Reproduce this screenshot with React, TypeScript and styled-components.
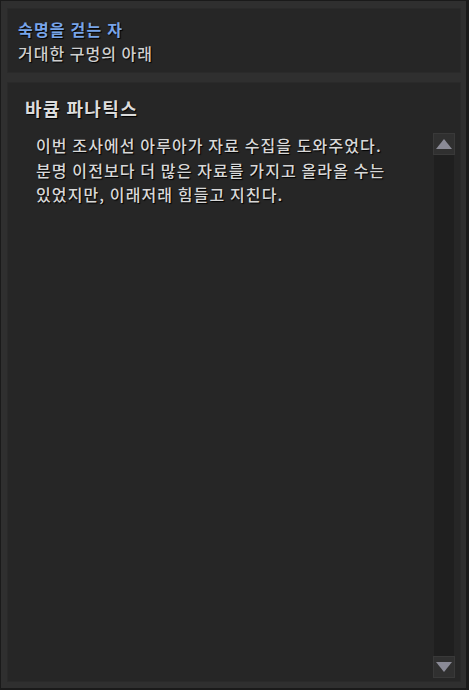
import styled, { createGlobalStyle } from 'styled-components';

const GlobalStyle = createGlobalStyle`
  html, body {
    margin: 0;
    padding: 0;
    background: #1a1a1a;
  }
  * {
    box-sizing: border-box;
  }
`;

const Window = styled.div`
  width: 469px;
  height: 690px;
  display: flex;
  flex-direction: column;
  gap: 9px;
  padding: 7px 5px 6px 6px;
  background: #2f2f2f;
  border-style: solid;
  border-color: #1a1a1a;
  border-width: 1px 3px 2px 1px;
  font-family: 'Noto Sans CJK KR', 'Noto Sans', sans-serif;
`;

const Panel = styled.section`
  background: #262626;
  box-shadow: inset 0 0 0 1px #2a2a2a;
`;

const HeaderPanel = styled(Panel)`
  height: 65px;
  padding: 9px 11px 0;
  display: flex;
  flex-direction: column;
`;

const HeaderLine = styled.div<{ $accent?: boolean }>`
  font-size: 16px;
  line-height: 24px;
  font-weight: ${(p) => (p.$accent ? 700 : 500)};
  color: ${(p) => (p.$accent ? '#78a4e8' : '#cfcfcf')};
  letter-spacing: ${(p) => (p.$accent ? '1.2px' : '1px')};
  text-shadow: 1px 1px 1px #000;
`;

const ContentPanel = styled(Panel)`
  flex: 1;
  display: flex;
  flex-direction: column;
  padding: 14px 6px 4px 18px;
  min-height: 0;
`;

const Title = styled.h2`
  margin: 0 0 13px;
  font-size: 18px;
  line-height: 24px;
  font-weight: 700;
  color: #dcdcdc;
  letter-spacing: 1.4px;
  text-shadow: 1px 1px 1px #000;
`;

const Body = styled.div`
  flex: 1;
  display: flex;
  gap: 12px;
  min-height: 0;
`;

const Text = styled.p`
  flex: 1;
  margin: 0;
  padding: 0 0 0 11px;
  font-size: 16px;
  line-height: 24.5px;
  font-weight: 500;
  color: #d8d8d8;
  letter-spacing: 1.1px;
  text-shadow: 1px 1px 1px #000;
  word-break: keep-all;
  white-space: nowrap;
`;

const Scrollbar = styled.div`
  width: 22px;
  display: flex;
  flex-direction: column;
`;

const Track = styled.div`
  flex: 1;
  margin: 0 1px;
  background: #1f1f1f;
`;

const ArrowButton = styled.div`
  height: 22px;
  display: flex;
  align-items: center;
  justify-content: center;
  background: #303030;
  border: 1px solid #393939;
`;

const Arrow = ({ down }: { down?: boolean }) => (
  <svg width="16" height="10" viewBox="0 0 16 10">
    <polygon
      points={down ? '0,0 16,0 8,10' : '8,0 16,10 0,10'}
      fill="#8a8a96"
    />
  </svg>
);

export default function App() {
  return (
    <>
      <GlobalStyle />
      <Window>
        <HeaderPanel>
          <HeaderLine $accent>숙명을 걷는 자</HeaderLine>
          <HeaderLine>거대한 구멍의 아래</HeaderLine>
        </HeaderPanel>
        <ContentPanel>
          <Title>바큠 파나틱스</Title>
          <Body>
            <Text>
              이번 조사에선 아루아가 자료 수집을 도와주었다.
              <br />
              분명 이전보다 더 많은 자료를 가지고 올라올 수는
              <br />
              있었지만, 이래저래 힘들고 지친다.
            </Text>
            <Scrollbar>
              <ArrowButton>
                <Arrow />
              </ArrowButton>
              <Track />
              <ArrowButton>
                <Arrow down />
              </ArrowButton>
            </Scrollbar>
          </Body>
        </ContentPanel>
      </Window>
    </>
  );
}
